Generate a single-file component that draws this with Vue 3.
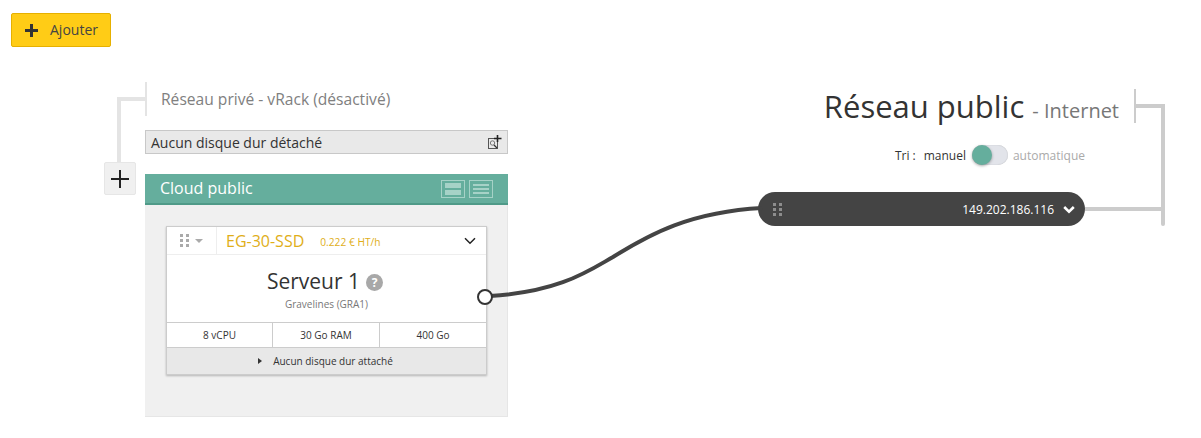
<script setup>
import { ref } from 'vue'

const specs = ref(['8 vCPU', '30 Go RAM', '400 Go'])
const dots = [0, 1, 2, 3, 4, 5]
</script>

<template>
  <div class="page">
    <button class="add"><span class="add-plus"></span><span class="add-text">Ajouter</span></button>

    <div class="networks">
      <section class="private">
        <h2 class="private-title">Réseau privé - vRack (désactivé)</h2>
        <div class="detached">
          <span>Aucun disque dur détaché</span>
          <svg width="14" height="15" viewBox="0 0 14 15">
            <rect x="0.5" y="3.5" width="9" height="10" fill="none" stroke="#555" />
            <circle cx="4.5" cy="8" r="2.2" fill="none" stroke="#777" />
            <path d="M6 10l3 3" stroke="#333" stroke-width="1.2" />
            <path d="M9.5 0v7M6 3.5h7.5" stroke="#222" stroke-width="1.6" />
          </svg>
        </div>
        <div class="cloud">
          <div class="cloud-head">
            <span>Cloud public</span>
            <div class="views">
              <span class="view"><i class="thick"></i><i class="thick"></i></span>
              <span class="view"><i></i><i></i><i></i></span>
            </div>
          </div>
          <div class="cloud-body">
            <div class="card">
              <div class="card-head">
                <div class="card-grip">
                  <div class="grip"><i v-for="d in dots" :key="d"></i></div>
                  <span class="caret-down"></span>
                </div>
                <span class="model">EG-30-SSD</span>
                <span class="price">0.222 € HT/h</span>
                <svg class="chev" width="12" height="8" viewBox="0 0 12 8">
                  <path d="M1 1.2l5 5 5-5" fill="none" stroke="#222" stroke-width="1.5" />
                </svg>
              </div>
              <div class="card-main">
                <div class="server">Serveur 1 <span class="help">?</span></div>
                <div class="region">Gravelines (GRA1)</div>
              </div>
              <div class="specs">
                <div class="spec" v-for="s in specs" :key="s">{{ s }}</div>
              </div>
              <div class="disks"><span class="caret-right"></span>Aucun disque dur attaché</div>
            </div>
          </div>
        </div>
      </section>

      <section class="public">
        <div class="public-head">
          <h1 class="public-title">Réseau public <small>- Internet</small></h1>
        </div>
        <div class="sort">
          <span class="sort-label">Tri :</span>
          <span>manuel</span>
          <span class="switch"><span class="knob"></span></span>
          <span class="sort-off">automatique</span>
        </div>
        <div class="ip">
          <div class="grip light"><i v-for="d in dots" :key="d"></i></div>
          <span class="ip-text">149.202.186.116</span>
          <svg width="12" height="9" viewBox="0 0 12 9">
            <path d="M1.2 2l4.8 4.6L10.800 2" fill="none" stroke="#fff" stroke-width="2.6" />
          </svg>
        </div>
      </section>
    </div>

    <!-- lignes du schéma -->
    <div class="tree-v"></div>
    <div class="tree-h"></div>
    <button class="tree-add">
      <svg width="18" height="18" viewBox="0 0 18 18"><path d="M9 0v18M0 9h18" stroke="#222" stroke-width="2" /></svg>
    </button>
    <div class="pub-h"></div>
    <div class="pub-v"></div>
    <div class="pub-link"></div>
    <svg class="wire" width="1201" height="438" viewBox="0 0 1201 438">
      <path d="M490 296C560 292 590 270 613 257C650 234 690 212 762 208" fill="none" stroke="#444" stroke-width="4" />
      <circle cx="485" cy="297" r="7" fill="#fff" stroke="#333" stroke-width="2" />
    </svg>
  </div>
</template>

<style scoped>
.page {
  position: relative;
  width: 1201px;
  height: 438px;
  overflow: hidden;
  background: #fff;
  font-family: "Open Sans", sans-serif;
  color: #333;
  padding: 13px 0 0 11px;
  box-sizing: border-box;
}
.add {
  display: flex;
  align-items: center;
  width: 100px;
  height: 34px;
  padding: 0 0 0 13px;
  background: #ffcc16;
  border: 1px solid #e6b000;
  border-radius: 2px;
  font: 14px "Open Sans", sans-serif;
  color: #444;
  box-sizing: border-box;
}
.add-plus {
  position: relative;
  width: 13px;
  height: 13px;
  margin-right: 12px;
  background:
    linear-gradient(#333, #333) center / 13px 3px no-repeat,
    linear-gradient(#333, #333) center / 3px 13px no-repeat;
}
.add-text {
  margin-top: -2px;
}
.networks {
  display: flex;
  margin-top: 35px;
  padding-left: 134px;
}
.private {
  width: 363px;
}
.private-title {
  height: 34px;
  margin: 0;
  padding-left: 14px;
  border-left: 2px solid #e4e4e4;
  font-weight: 400;
  font-size: 15.6px;
  line-height: 34px;
  color: #808080;
  box-sizing: border-box;
}
.detached {
  display: flex;
  justify-content: space-between;
  align-items: center;
  height: 24px;
  margin-top: 14px;
  padding: 0 5px 0 5px;
  background: #e9e9e9;
  border: 1px solid #c8c8c8;
  font-size: 14px;
  box-sizing: border-box;
}
.cloud {
  margin-top: 20px;
}
.cloud-head {
  display: flex;
  justify-content: space-between;
  align-items: center;
  height: 31px;
  padding: 0 15px 0 15px;
  background: #65ae9d;
  border-bottom: 2px solid #4f9a88;
  color: #fff;
  font-size: 16px;
  box-sizing: border-box;
}
.cloud-head > span {
  margin-top: -2px;
}
.views {
  display: flex;
  gap: 4px;
}
.view {
  display: flex;
  flex-direction: column;
  justify-content: center;
  gap: 2px;
  width: 24px;
  height: 18px;
  padding: 0 3px;
  border: 1px solid #a6d2c7;
  box-sizing: border-box;
}
.view i {
  height: 2px;
  background: #a6d2c7;
}
.view i.thick {
  height: 5px;
}
.cloud-body {
  height: 212px;
  padding: 21px 20px 0 21px;
  background: #f0f0f0;
  border-right: 1px solid #e6e6e6;
  border-bottom: 1px solid #e6e6e6;
  box-sizing: border-box;
}
.card {
  height: 149px;
  background: #fff;
  border: 1px solid #ccc;
  box-shadow: 0 1px 2px rgba(0, 0, 0, 0.25);
  box-sizing: border-box;
  display: flex;
  flex-direction: column;
}
.card-head {
  display: flex;
  align-items: center;
  height: 28px;
  border-bottom: 1px solid #eee;
  box-sizing: border-box;
  flex: none;
}
.card-grip {
  display: flex;
  align-items: center;
  gap: 6px;
  width: 50px;
  height: 100%;
  padding-left: 13px;
  border-right: 1px solid #eee;
  box-sizing: border-box;
}
.grip {
  display: grid;
  grid-template-columns: 3px 3px;
  gap: 2px 3px;
}
.grip i {
  width: 3px;
  height: 3px;
  background: #aaa;
}
.grip.light i {
  background: #8d8d8d;
}
.caret-down {
  width: 0;
  height: 0;
  border: 4px solid transparent;
  border-top: 4px solid #aaa;
  border-bottom: 0;
}
.model {
  margin-left: 9px;
  font-size: 16px;
  color: #e0ae18;
}
.price {
  margin-left: 16px;
  margin-top: 2px;
  font-size: 10.2px;
  color: #e0ae18;
}
.chev {
  margin-left: auto;
  margin-right: 10px;
}
.card-main {
  flex: 1;
  text-align: center;
  padding-top: 12px;
  box-sizing: border-box;
}
.server {
  display: flex;
  justify-content: center;
  align-items: center;
  gap: 7px;
  padding-right: 3px;
  font-size: 21px;
  line-height: 29px;
  color: #333;
}
.help {
  width: 17px;
  height: 17px;
  margin-top: 2px;
  margin-left: -1px;
  border-radius: 50%;
  background: #a8a8a8;
  color: #fff;
  font-size: 12px;
  font-weight: 700;
  line-height: 17px;
}
.region {
  margin-top: 1px;
  font-size: 10px;
  line-height: 14px;
  color: #777;
}
.specs {
  display: grid;
  grid-template-columns: 106px 107px 1fr;
  height: 25px;
  border-top: 1px solid #ccc;
  box-sizing: border-box;
  flex: none;
}
.spec {
  font-size: 10px;
  line-height: 24px;
  text-align: center;
  border-right: 1px solid #ccc;
}
.spec:last-child {
  border-right: 0;
}
.disks {
  flex: none;
  display: flex;
  justify-content: center;
  align-items: center;
  gap: 11px;
  height: 27px;
  background: #e8e8e8;
  border-top: 1px solid #ccc;
  font-size: 10px;
  padding: 0 2px 1px 0;
  box-sizing: border-box;
}
.caret-right {
  width: 0;
  height: 0;
  border: 3px solid transparent;
  border-left: 4px solid #333;
  border-right: 0;
}
.public {
  width: 362px;
  margin-left: 250px;
  display: flex;
  flex-direction: column;
}
.public-head {
  display: flex;
  justify-content: flex-end;
  height: 34px;
  margin-top: 7px;
  padding-right: 15px;
  border-right: 2px solid #ccc;
  width: 379px;
  margin-left: -1px;
  box-sizing: border-box;
}
.public-title {
  margin: 0;
  font-weight: 400;
  font-size: 31px;
  line-height: 34px;
  white-space: nowrap;
  color: #333;
}
.public-title small {
  font-size: 20px;
  color: #777;
}
.sort {
  display: flex;
  align-items: center;
  width: 327px;
  justify-content: flex-end;
  height: 24px;
  margin-top: 20px;
  font-size: 12px;
  white-space: nowrap;
}
.sort-label {
  margin-right: 8px;
}
.sort-off {
  color: #aaa;
}
.switch {
  position: relative;
  width: 36px;
  height: 20px;
  margin: 0 5px 0 6px;
  border-radius: 10px;
  background: #e2e4ea;
  box-shadow: inset 0 0 1px rgba(0, 0, 0, 0.3);
}
.knob {
  position: absolute;
  left: 0;
  top: 0;
  width: 20px;
  height: 20px;
  border-radius: 50%;
  background: #65ae9d;
  box-shadow: 0 1px 3px rgba(0, 0, 0, 0.35);
}
.ip {
  display: flex;
  align-items: center;
  width: 327px;
  height: 34px;
  margin-top: 25px;
  padding: 0 10px 0 15px;
  background: #444;
  border-radius: 17px;
  color: #fff;
  font-size: 12px;
  box-sizing: border-box;
}
.ip-text {
  margin-left: auto;
  margin-right: 9px;
}
.tree-v {
  position: absolute;
  left: 117px;
  top: 97px;
  width: 4px;
  height: 66px;
  background: #e4e4e4;
}
.tree-h {
  position: absolute;
  left: 117px;
  top: 97px;
  width: 28px;
  height: 4px;
  background: #e4e4e4;
}
.tree-add {
  position: absolute;
  left: 104px;
  top: 162px;
  display: flex;
  align-items: center;
  justify-content: center;
  width: 32px;
  height: 33px;
  padding: 0;
  background: #f0f0f0;
  border: 1px solid #e6e6e6;
  border-radius: 2px;
}
.pub-h {
  position: absolute;
  left: 1136px;
  top: 104px;
  width: 29px;
  height: 4px;
  background: #ccc;
}
.pub-v {
  position: absolute;
  left: 1161px;
  top: 104px;
  width: 4px;
  height: 122px;
  border-radius: 0 0 2px 2px;
  background: #ccc;
}
.pub-link {
  position: absolute;
  left: 1085px;
  top: 207px;
  width: 78px;
  height: 4px;
  background: #ccc;
}
.wire {
  position: absolute;
  left: 0;
  top: 0;
  pointer-events: none;
}
</style>
